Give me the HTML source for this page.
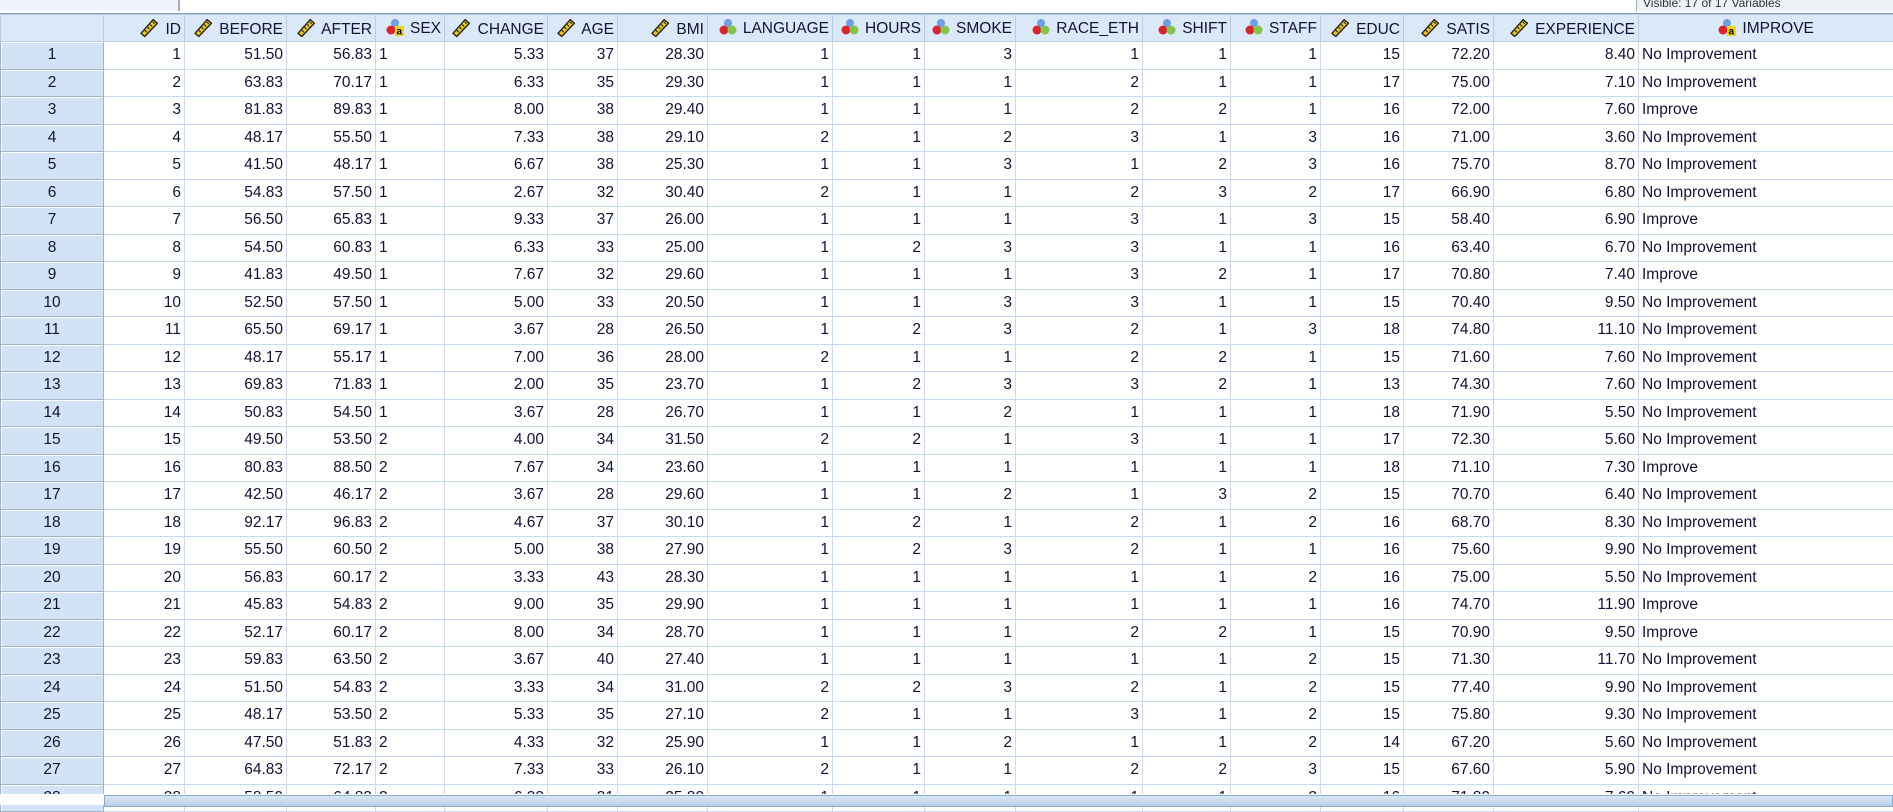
<!DOCTYPE html>
<html><head><meta charset="utf-8"><style>
body{margin:0;width:1893px;height:805px;overflow:hidden;background:#fff;font-family:"Liberation Sans",Arial,sans-serif;position:relative}
.top{position:absolute;left:0;top:0;width:1893px;height:13px;background:#fff;border-bottom:1px solid #7f9db9}
.tl{position:absolute;left:0;top:0;width:178px;height:11px;background:#f0f4fa;border-right:2px solid #aab}
.tr{position:absolute;left:1636px;top:0;width:257px;height:11px;background:#eef2f7;border-left:1px solid #aab;font-size:12px;color:#333;line-height:6px;padding-left:6px;overflow:hidden}
table{position:absolute;left:0;top:14px;border-collapse:collapse;table-layout:fixed;width:1893px;font-size:15.5px;color:#121236}
td,th{border:1px solid #c7daef;padding:0 3px;white-space:nowrap;overflow:hidden;height:26.5px;text-align:right}
th{background:#dbe8f8;font-weight:normal;border:1px solid #b9cde4;height:26px}
th svg{vertical-align:-3px;margin-right:2px}
td.rh{background:#d3e3f6;text-align:center;border:1px solid #9fb4cc;box-shadow:inset 1px 1px 0 #fff}
td.l{text-align:left}
th.c{text-align:center}
.sb{position:absolute;left:0;top:794px;width:1893px;height:11px;background:#fff}
.sb div{position:absolute;left:104px;top:1px;right:0;height:10px;background:linear-gradient(#d9e6f5,#b9cfea);border:1px solid #8fa9c9}
</style></head><body>
<svg width="0" height="0" style="position:absolute"><defs>
<symbol id="r" viewBox="0 0 18 18"><path d="M1 14.5 L12.5 1.5 L16.5 5 L4.5 17.5 Z" fill="#e8c52a" stroke="#222" stroke-width="1.3" stroke-linejoin="round"/><path d="M4.5 11.5l2 2M7 8.5l2 2M9.5 6l2 2M12 3.5l2 2" stroke="#222" stroke-width="1"/></symbol>
<symbol id="n" viewBox="0 0 18 18"><circle cx="9" cy="5" r="4" fill="#6f9fe0"/><circle cx="5" cy="12" r="4.5" fill="#d4262c"/><circle cx="13" cy="12" r="4.5" fill="#86c34a"/></symbol>
<symbol id="s" viewBox="0 0 18 18"><circle cx="9" cy="5" r="4" fill="#6f9fe0"/><circle cx="5" cy="12" r="4.5" fill="#d4262c"/><rect x="9" y="8" width="9" height="10" fill="#f0d21c"/><text x="10.5" y="16.5" font-size="10" font-weight="bold" font-family="Liberation Sans" fill="#000">a</text></symbol>
</defs></svg>
<div class="top"><div class="tl"></div><div class="tr">Visible: 17 of 17 Variables</div></div>
<table>
<colgroup><col style="width:103px"><col style="width:81px"><col style="width:102px"><col style="width:89px"><col style="width:69px"><col style="width:103px"><col style="width:70px"><col style="width:90px"><col style="width:125px"><col style="width:92px"><col style="width:91px"><col style="width:127px"><col style="width:88px"><col style="width:90px"><col style="width:83px"><col style="width:90px"><col style="width:145px"><col style="width:255px"></colgroup>
<tr><th></th><th><svg width="19" height="19"><use href="#r"/></svg> ID</th><th><svg width="19" height="19"><use href="#r"/></svg> BEFORE</th><th><svg width="19" height="19"><use href="#r"/></svg> AFTER</th><th><svg width="18" height="18"><use href="#s"/></svg> SEX</th><th><svg width="19" height="19"><use href="#r"/></svg> CHANGE</th><th><svg width="19" height="19"><use href="#r"/></svg> AGE</th><th><svg width="19" height="19"><use href="#r"/></svg> BMI</th><th><svg width="18" height="18"><use href="#n"/></svg> LANGUAGE</th><th><svg width="18" height="18"><use href="#n"/></svg> HOURS</th><th><svg width="18" height="18"><use href="#n"/></svg> SMOKE</th><th><svg width="18" height="18"><use href="#n"/></svg> RACE_ETH</th><th><svg width="18" height="18"><use href="#n"/></svg> SHIFT</th><th><svg width="18" height="18"><use href="#n"/></svg> STAFF</th><th><svg width="19" height="19"><use href="#r"/></svg> EDUC</th><th><svg width="19" height="19"><use href="#r"/></svg> SATIS</th><th><svg width="19" height="19"><use href="#r"/></svg> EXPERIENCE</th><th class="c"><svg width="18" height="18"><use href="#s"/></svg> IMPROVE</th></tr>
<tr><td class="rh">1</td><td>1</td><td>51.50</td><td>56.83</td><td class="l">1</td><td>5.33</td><td>37</td><td>28.30</td><td>1</td><td>1</td><td>3</td><td>1</td><td>1</td><td>1</td><td>15</td><td>72.20</td><td>8.40</td><td class="l">No Improvement</td></tr>
<tr><td class="rh">2</td><td>2</td><td>63.83</td><td>70.17</td><td class="l">1</td><td>6.33</td><td>35</td><td>29.30</td><td>1</td><td>1</td><td>1</td><td>2</td><td>1</td><td>1</td><td>17</td><td>75.00</td><td>7.10</td><td class="l">No Improvement</td></tr>
<tr><td class="rh">3</td><td>3</td><td>81.83</td><td>89.83</td><td class="l">1</td><td>8.00</td><td>38</td><td>29.40</td><td>1</td><td>1</td><td>1</td><td>2</td><td>2</td><td>1</td><td>16</td><td>72.00</td><td>7.60</td><td class="l">Improve</td></tr>
<tr><td class="rh">4</td><td>4</td><td>48.17</td><td>55.50</td><td class="l">1</td><td>7.33</td><td>38</td><td>29.10</td><td>2</td><td>1</td><td>2</td><td>3</td><td>1</td><td>3</td><td>16</td><td>71.00</td><td>3.60</td><td class="l">No Improvement</td></tr>
<tr><td class="rh">5</td><td>5</td><td>41.50</td><td>48.17</td><td class="l">1</td><td>6.67</td><td>38</td><td>25.30</td><td>1</td><td>1</td><td>3</td><td>1</td><td>2</td><td>3</td><td>16</td><td>75.70</td><td>8.70</td><td class="l">No Improvement</td></tr>
<tr><td class="rh">6</td><td>6</td><td>54.83</td><td>57.50</td><td class="l">1</td><td>2.67</td><td>32</td><td>30.40</td><td>2</td><td>1</td><td>1</td><td>2</td><td>3</td><td>2</td><td>17</td><td>66.90</td><td>6.80</td><td class="l">No Improvement</td></tr>
<tr><td class="rh">7</td><td>7</td><td>56.50</td><td>65.83</td><td class="l">1</td><td>9.33</td><td>37</td><td>26.00</td><td>1</td><td>1</td><td>1</td><td>3</td><td>1</td><td>3</td><td>15</td><td>58.40</td><td>6.90</td><td class="l">Improve</td></tr>
<tr><td class="rh">8</td><td>8</td><td>54.50</td><td>60.83</td><td class="l">1</td><td>6.33</td><td>33</td><td>25.00</td><td>1</td><td>2</td><td>3</td><td>3</td><td>1</td><td>1</td><td>16</td><td>63.40</td><td>6.70</td><td class="l">No Improvement</td></tr>
<tr><td class="rh">9</td><td>9</td><td>41.83</td><td>49.50</td><td class="l">1</td><td>7.67</td><td>32</td><td>29.60</td><td>1</td><td>1</td><td>1</td><td>3</td><td>2</td><td>1</td><td>17</td><td>70.80</td><td>7.40</td><td class="l">Improve</td></tr>
<tr><td class="rh">10</td><td>10</td><td>52.50</td><td>57.50</td><td class="l">1</td><td>5.00</td><td>33</td><td>20.50</td><td>1</td><td>1</td><td>3</td><td>3</td><td>1</td><td>1</td><td>15</td><td>70.40</td><td>9.50</td><td class="l">No Improvement</td></tr>
<tr><td class="rh">11</td><td>11</td><td>65.50</td><td>69.17</td><td class="l">1</td><td>3.67</td><td>28</td><td>26.50</td><td>1</td><td>2</td><td>3</td><td>2</td><td>1</td><td>3</td><td>18</td><td>74.80</td><td>11.10</td><td class="l">No Improvement</td></tr>
<tr><td class="rh">12</td><td>12</td><td>48.17</td><td>55.17</td><td class="l">1</td><td>7.00</td><td>36</td><td>28.00</td><td>2</td><td>1</td><td>1</td><td>2</td><td>2</td><td>1</td><td>15</td><td>71.60</td><td>7.60</td><td class="l">No Improvement</td></tr>
<tr><td class="rh">13</td><td>13</td><td>69.83</td><td>71.83</td><td class="l">1</td><td>2.00</td><td>35</td><td>23.70</td><td>1</td><td>2</td><td>3</td><td>3</td><td>2</td><td>1</td><td>13</td><td>74.30</td><td>7.60</td><td class="l">No Improvement</td></tr>
<tr><td class="rh">14</td><td>14</td><td>50.83</td><td>54.50</td><td class="l">1</td><td>3.67</td><td>28</td><td>26.70</td><td>1</td><td>1</td><td>2</td><td>1</td><td>1</td><td>1</td><td>18</td><td>71.90</td><td>5.50</td><td class="l">No Improvement</td></tr>
<tr><td class="rh">15</td><td>15</td><td>49.50</td><td>53.50</td><td class="l">2</td><td>4.00</td><td>34</td><td>31.50</td><td>2</td><td>2</td><td>1</td><td>3</td><td>1</td><td>1</td><td>17</td><td>72.30</td><td>5.60</td><td class="l">No Improvement</td></tr>
<tr><td class="rh">16</td><td>16</td><td>80.83</td><td>88.50</td><td class="l">2</td><td>7.67</td><td>34</td><td>23.60</td><td>1</td><td>1</td><td>1</td><td>1</td><td>1</td><td>1</td><td>18</td><td>71.10</td><td>7.30</td><td class="l">Improve</td></tr>
<tr><td class="rh">17</td><td>17</td><td>42.50</td><td>46.17</td><td class="l">2</td><td>3.67</td><td>28</td><td>29.60</td><td>1</td><td>1</td><td>2</td><td>1</td><td>3</td><td>2</td><td>15</td><td>70.70</td><td>6.40</td><td class="l">No Improvement</td></tr>
<tr><td class="rh">18</td><td>18</td><td>92.17</td><td>96.83</td><td class="l">2</td><td>4.67</td><td>37</td><td>30.10</td><td>1</td><td>2</td><td>1</td><td>2</td><td>1</td><td>2</td><td>16</td><td>68.70</td><td>8.30</td><td class="l">No Improvement</td></tr>
<tr><td class="rh">19</td><td>19</td><td>55.50</td><td>60.50</td><td class="l">2</td><td>5.00</td><td>38</td><td>27.90</td><td>1</td><td>2</td><td>3</td><td>2</td><td>1</td><td>1</td><td>16</td><td>75.60</td><td>9.90</td><td class="l">No Improvement</td></tr>
<tr><td class="rh">20</td><td>20</td><td>56.83</td><td>60.17</td><td class="l">2</td><td>3.33</td><td>43</td><td>28.30</td><td>1</td><td>1</td><td>1</td><td>1</td><td>1</td><td>2</td><td>16</td><td>75.00</td><td>5.50</td><td class="l">No Improvement</td></tr>
<tr><td class="rh">21</td><td>21</td><td>45.83</td><td>54.83</td><td class="l">2</td><td>9.00</td><td>35</td><td>29.90</td><td>1</td><td>1</td><td>1</td><td>1</td><td>1</td><td>1</td><td>16</td><td>74.70</td><td>11.90</td><td class="l">Improve</td></tr>
<tr><td class="rh">22</td><td>22</td><td>52.17</td><td>60.17</td><td class="l">2</td><td>8.00</td><td>34</td><td>28.70</td><td>1</td><td>1</td><td>1</td><td>2</td><td>2</td><td>1</td><td>15</td><td>70.90</td><td>9.50</td><td class="l">Improve</td></tr>
<tr><td class="rh">23</td><td>23</td><td>59.83</td><td>63.50</td><td class="l">2</td><td>3.67</td><td>40</td><td>27.40</td><td>1</td><td>1</td><td>1</td><td>1</td><td>1</td><td>2</td><td>15</td><td>71.30</td><td>11.70</td><td class="l">No Improvement</td></tr>
<tr><td class="rh">24</td><td>24</td><td>51.50</td><td>54.83</td><td class="l">2</td><td>3.33</td><td>34</td><td>31.00</td><td>2</td><td>2</td><td>3</td><td>2</td><td>1</td><td>2</td><td>15</td><td>77.40</td><td>9.90</td><td class="l">No Improvement</td></tr>
<tr><td class="rh">25</td><td>25</td><td>48.17</td><td>53.50</td><td class="l">2</td><td>5.33</td><td>35</td><td>27.10</td><td>2</td><td>1</td><td>1</td><td>3</td><td>1</td><td>2</td><td>15</td><td>75.80</td><td>9.30</td><td class="l">No Improvement</td></tr>
<tr><td class="rh">26</td><td>26</td><td>47.50</td><td>51.83</td><td class="l">2</td><td>4.33</td><td>32</td><td>25.90</td><td>1</td><td>1</td><td>2</td><td>1</td><td>1</td><td>2</td><td>14</td><td>67.20</td><td>5.60</td><td class="l">No Improvement</td></tr>
<tr><td class="rh">27</td><td>27</td><td>64.83</td><td>72.17</td><td class="l">2</td><td>7.33</td><td>33</td><td>26.10</td><td>2</td><td>1</td><td>1</td><td>2</td><td>2</td><td>3</td><td>15</td><td>67.60</td><td>5.90</td><td class="l">No Improvement</td></tr>
<tr><td class="rh">28</td><td>28</td><td>58.50</td><td>64.83</td><td class="l">2</td><td>6.33</td><td>31</td><td>25.80</td><td>1</td><td>1</td><td>1</td><td>1</td><td>1</td><td>2</td><td>16</td><td>71.80</td><td>7.60</td><td class="l">No Improvement</td></tr>
</table>
<div class="sb"><div></div></div>
</body></html>
